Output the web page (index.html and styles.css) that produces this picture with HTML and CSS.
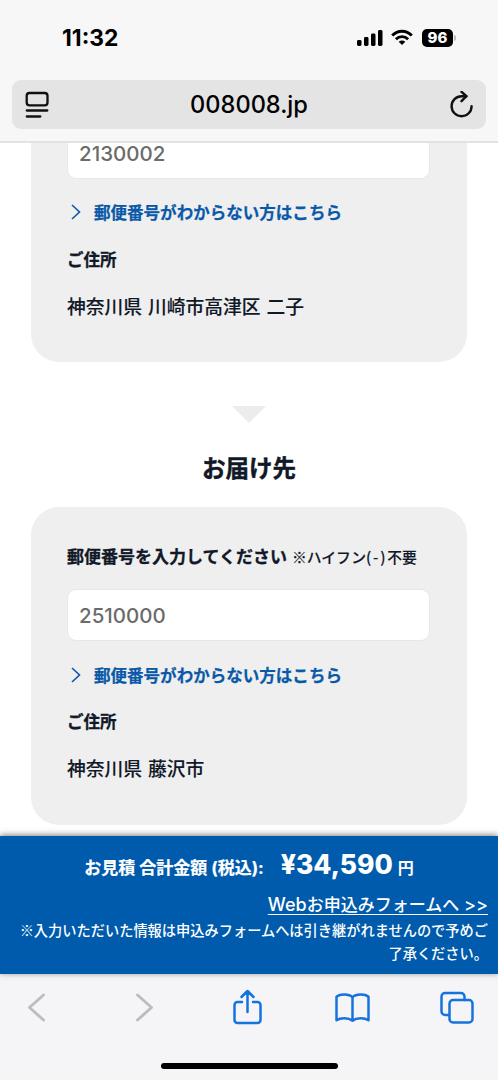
FILE: index.html
```
<!DOCTYPE html>
<html lang="ja">
<head>
<meta charset="utf-8">
<title>008008.jp</title>
<link rel="stylesheet" href="styles.css">
</head>
<body>
<div class="phone">
  <header class="browser-top">
    <div class="status">
      <span class="time">11:32</span>
      <div class="indicators">
        <svg class="signal" width="26" height="17" viewBox="0 0 26 17"><rect x="0" y="11" width="4.5" height="6" rx="1.4"/><rect x="7" y="8" width="4.5" height="9" rx="1.4"/><rect x="14" y="4.500" width="4.500" height="12.500" rx="1.400"/><rect x="21" y="1" width="4.500" height="16" rx="1.400"/></svg>
        <svg class="wifi" width="22" height="17" viewBox="0 0 22 17"><g fill="none" stroke="#000" stroke-width="2.900"><path d="M1.200 6.500C6.700.800 15.300.800 20.800 6.500"/><path d="M4.900 10.200c3.400-3.400 8.800-3.400 12.200 0"/></g><path d="M11 16l-3.300-3.300c1.800-1.600 4.800-1.600 6.600 0z"/></svg>
        <span class="battery">96</span><span class="battery-tip"></span>
      </div>
    </div>
    <div class="address-bar">
      <svg width="24" height="28" viewBox="0 0 24 28" fill="none" stroke="#111" stroke-width="2.300" stroke-linecap="round"><rect x="1.700" y="2" width="20.800" height="12.300" rx="2.800"/><path d="M1.800 19.500h20.500M1.800 25.500h13.500"/></svg>
      <span class="domain">008008.jp</span>
      <svg class="reload" width="24" height="28" viewBox="0 0 24 28" fill="none" stroke="#111" stroke-width="2.400" stroke-linecap="round" stroke-linejoin="round"><path d="M22.600 15.200a10 10 0 1 1-10-10h4.800"/><path d="M12.500 0.800l4.900 4.400-4.900 5"/></svg>
    </div>
  </header>

  <main class="content">
    <section class="card card-scrolled">
      <div class="field">2130002</div>
      <a class="help"><svg width="10" height="16" viewBox="0 0 10 16"><path d="M1 1l7.500 7L1 15"/></svg><span>郵便番号がわからない方はこちら</span></a>
      <p class="sub">ご住所</p>
      <p class="address">神奈川県 川崎市高津区 二子</p>
    </section>
    <div class="arrow"></div>
    <h2 class="heading">お届け先</h2>
    <section class="card">
      <p class="label">郵便番号を入力してください <small>※ハイフン<span class="hyphen">(-)</span>不要</small></p>
      <div class="field">2510000</div>
      <a class="help"><svg width="10" height="16" viewBox="0 0 10 16"><path d="M1 1l7.500 7L1 15"/></svg><span>郵便番号がわからない方はこちら</span></a>
      <p class="sub">ご住所</p>
      <p class="address">神奈川県 藤沢市</p>
    </section>
  </main>

  <aside class="estimate">
    <div class="total"><span class="total-label">お見積 合計金額 (税込):</span><span class="price">¥34,590</span><span class="yen">円</span></div>
    <div class="apply"><a>Web<span class="kana">お申込みフォームへ</span> &gt;&gt;</a></div>
    <p class="notice">※入力いただいた情報は申込みフォームへは引き継がれませんので予めご<br>了承ください。</p>
  </aside>

  <footer class="browser-bottom">
    <nav class="tools">
      <svg class="off" width="34" height="36" viewBox="0 0 34 36"><path d="M23.500 6L9.500 18.500 23.500 31"/></svg>
      <svg class="off" width="34" height="36" viewBox="0 0 34 36"><path d="M12.500 6L26.500 18.500 12.500 31"/></svg>
      <svg width="34" height="36" viewBox="0 0 34 36"><path d="M13 13H8.500a3 3 0 0 0-3 3v15a3 3 0 0 0 3 3h20a3 3 0 0 0 3-3V16a3 3 0 0 0-3-3H24M18.500 23V2M12.500 8l6-6 6 6"/></svg>
      <svg width="36" height="36" viewBox="0 0 36 36"><path d="M18.500 8.200C15 4.700 6 4.700 2.500 7.700v23.600c4-2.900 12-2.900 16 .4 4-3.300 12-3.300 16-.4V7.700C31 4.700 22 4.700 18.500 8.200zM18.500 8.200v23.500"/></svg>
      <svg width="36" height="36" viewBox="0 0 36 36"><rect x="9.500" y="11" width="23" height="22.500" rx="3.500"/><path d="M9 26H5A3.500 3.500 0 0 1 1.500 22.500V7.500A3.500 3.500 0 0 1 5 4h16A3.500 3.500 0 0 1 24.500 7.500v3.500"/></svg>
    </nav>
    <div class="home"></div>
  </footer>
</div>
</body>
</html>
```
FILE: styles.css
```
* { box-sizing: border-box; }
body { margin: 0; background: #fff; }
p, h2 { margin: 0; }
svg { display: block; flex: none; }

.phone {
  width: 498px;
  height: 1080px;
  display: flex;
  flex-direction: column;
  overflow: hidden;
  font-family: Inter, "Noto Sans CJK JP", sans-serif;
  color: #111827;
  white-space: nowrap;
}

.browser-top {
  flex: none;
  height: 143px;
  background: #f7f7f8;
  border-bottom: 2px solid #e2e2e4;
}
.status {
  height: 80px;
  padding: 0 42px 5px 62px;
  display: flex;
  align-items: center;
  justify-content: space-between;
}
.time { font-size: 22.800px; font-weight: 700; color: #000; }
.indicators { display: flex; align-items: center; }
.wifi { margin-left: 8px; }
.battery {
  width: 31px;
  height: 18px;
  margin-left: 9px;
  border-radius: 5px;
  background: #000;
  color: #fff;
  font-size: 15px;
  line-height: 18px;
  font-weight: 800;
  text-align: center;
}
.battery-tip { width: 2px; height: 6px; margin-left: 1px; border-radius: 0 3px 3px 0; background: #bbb; }
.address-bar {
  height: 49px;
  margin: 0 12px;
  padding: 0 13px;
  border-radius: 9px;
  background: #e4e4e5;
  display: flex;
  align-items: center;
  justify-content: space-between;
}
.domain { font-size: 23.600px; font-weight: 500; color: #000; line-height: 49px; }

.content { flex: none; height: 693px; padding: 0 31px; background: #fff; }
.card {
  height: 318px;
  padding: 37px 38px 0 36px;
  border-radius: 28px;
  background: #efefef;
}
.card-scrolled { height: 219px; padding-top: 0; border-radius: 0 0 28px 28px; }
.label { height: 26px; line-height: 26px; font-size: 17px; font-weight: 700; -webkit-text-stroke: .3px #111827; }
.label small {
  margin-left: 1px;
  font-family: "Noto Sans CJK JP", sans-serif;
  font-size: 14.800px;
  font-weight: 500;
  -webkit-text-stroke: .15px #111827;
}
.hyphen { letter-spacing: 1.800px; }
.field {
  height: 52px;
  width: 363px;
  margin-top: 19px;
  padding-left: 11px;
  border: 1px solid #e5e7ef;
  border-radius: 9px;
  background: #fff;
  color: #6b6b6b;
  font-size: 20.500px;
  line-height: 52px;
  font-weight: 500;
}
.card-scrolled .field {
  height: 36px;
  margin-top: 0;
  padding-bottom: 14px;
  border-top: 0;
  border-radius: 0 0 9px 9px;
  line-height: 21px;
}
.help {
  height: 26px;
  margin-top: 21px;
  padding-left: 4px;
  display: flex;
  align-items: center;
  gap: 13px;
  color: #0959a8;
  font-size: 16.550px;
  font-weight: 700;
  -webkit-text-stroke: .25px #0959a8;
}
.card-scrolled .help { margin-top: 20px; }
.help path { fill: none; stroke: #0959a8; stroke-width: 1.600; }
.sub { height: 26px; margin-top: 21px; line-height: 26px; font-size: 16.500px; font-weight: 700; -webkit-text-stroke: .3px #111827; }
.card-scrolled .sub { margin-top: 22px; }
.address {
  height: 26px;
  margin-top: 22px;
  line-height: 26px;
  font-size: 18.800px;
  word-spacing: .800px;
  font-weight: 500;
  -webkit-text-stroke: .12px #111827;
}
.arrow {
  width: 34px;
  height: 17px;
  margin: 44px auto 0;
  background: #ececec;
  clip-path: polygon(0 0, 100% 0, 50% 100%);
}
.heading {
  height: 40px;
  margin: 26px 0 18px;
  font-size: 23.500px;
  line-height: 40px;
  font-weight: 700;
  text-align: center;
  -webkit-text-stroke: .4px #111827;
}

.estimate {
  flex: none;
  height: 138px;
  padding: 10px 10px 0;
  background: #005bac;
  color: #fff;
  box-shadow: 0 -1px 6px rgba(0, 0, 0, .5);
  z-index: 1;
}
.total { height: 36px; display: flex; align-items: baseline; justify-content: center; line-height: 36px; font-weight: 700; }
.total-label { font-size: 17px; -webkit-text-stroke: .2px #fff; }
.price { margin-left: 17px; font-size: 26.400px; font-weight: 800; }
.yen { margin-left: 5px; font-size: 16px; }
.apply { height: 37px; line-height: 46px; text-align: right; font-size: 18px; font-weight: 500; }
.apply a { text-decoration: underline; text-decoration-thickness: 1px; text-underline-offset: 3px; }
.kana { font-size: 17px; }
.notice { font-family: "Noto Sans CJK JP", sans-serif; line-height: 23px; font-size: 14.220px; font-weight: 500; text-align: right; }

.browser-bottom { flex: none; height: 106px; background: #f5f5f7; }
.tools {
  height: 89px;
  padding: 15px 22px 0 20px;
  display: flex;
  justify-content: space-between;
}
.tools svg { fill: none; stroke: #1473df; stroke-width: 2.500; stroke-linecap: round; stroke-linejoin: round; }
.tools .off { stroke: #bdbdbf; stroke-width: 2.900; }
.home { width: 177px; height: 6px; margin: 0 auto; border-radius: 3px; background: #000; }
```
